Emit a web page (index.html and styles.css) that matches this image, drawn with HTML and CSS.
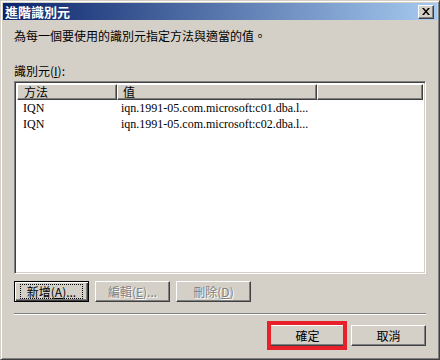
FILE: index.html
```html
<!DOCTYPE html>
<html lang="zh-Hant">
<head>
    <meta charset="UTF-8">
    <title>進階識別元</title>
    <link rel="stylesheet" href="styles.css">
</head>
<body>
<div class="window">
    <div class="titlebar">
        <span class="title">進階識別元</span>
        <div class="closeBtn">
            <svg width="8" height="7" viewBox="0 0 8 7">
                <path d="M0 0h2l2 2.5L6 0h2L5 3.5 8 7H6L4 4.5 2 7H0l3-3.5z" fill="#000"/>
            </svg>
        </div>
    </div>
    <div class="content">
        <p class="intro">為每一個要使用的識別元指定方法與適當的值。</p>
        <div class="label">識別元(<u>I</u>):</div>
        <div class="listview">
            <div class="lvHeader">
                <div class="col colMethod">方法</div>
                <div class="col colValue">值</div>
                <div class="col colRest"></div>
            </div>
            <div class="lvRow"><span class="cellMethod">IQN</span><span class="cellValue">iqn.1991-05.com.microsoft:c01.dba.l...</span></div>
            <div class="lvRow"><span class="cellMethod">IQN</span><span class="cellValue">iqn.1991-05.com.microsoft:c02.dba.l...</span></div>
        </div>
        <div class="btnRow">
            <div class="btn btnDefault"><span class="focus">新增(<u>A</u>)...</span></div>
            <div class="btn disabled">編輯(<u>E</u>)...</div>
            <div class="btn disabled">刪除(<u>D</u>)</div>
        </div>
        <div class="sep"></div>
        <div class="footer">
            <div class="btn okBtn">確定</div>
            <div class="btn">取消</div>
            <div class="highlight"></div>
        </div>
    </div>
</div>
</body>
</html>
```

FILE: styles.css
```css
body {
    margin: 0;
    padding: 0;
    background: #d4d0c8;
    font-family: "Noto Sans CJK TC", "Liberation Sans", sans-serif;
    font-size: 12px;
    color: #000;
}

.window {
    width: 440px;
    height: 360px;
    box-sizing: border-box;
    background: #d4d0c8;
    border: 1px solid;
    border-color: #d4d0c8 #404040 #404040 #d4d0c8;
    box-shadow: inset 1px 1px #fff, inset -1px -1px #808080;
    padding: 2px;
}

.titlebar {
    height: 17px;
    display: flex;
    align-items: center;
    justify-content: space-between;
    background: linear-gradient(90deg, #0a246a, #a6caf0);
    padding: 0 3px 0 2px;
}

.title {
    color: #fff;
    font-weight: bold;
    font-size: 13px;
    line-height: 17px;
}

.closeBtn {
    width: 16px;
    height: 14px;
    box-sizing: border-box;
    display: flex;
    align-items: center;
    justify-content: center;
    background: #d4d0c8;
    border: 1px solid;
    border-color: #fff #404040 #404040 #fff;
    box-shadow: inset -1px -1px #808080;
}

.content {
    padding: 0 11px 0 11px;
}

.intro {
    margin: 8px 0 0 0;
    line-height: 15px;
}

.label {
    margin-top: 21px;
    line-height: 14px;
}

.listview {
    margin-top: 3px;
    height: 193px;
    box-sizing: border-box;
    background: #fff;
    border: 1px solid;
    border-color: #808080 #fff #fff #808080;
    box-shadow: inset 1px 1px #404040, inset -1px -1px #d4d0c8;
    padding: 2px 2px;
}

.lvHeader {
    display: flex;
    height: 16px;
}

.col {
    box-sizing: border-box;
    background: #d4d0c8;
    border: 1px solid;
    border-color: #fff #404040 #404040 #fff;
    box-shadow: inset -1px -1px #808080;
    line-height: 14px;
    padding-left: 6px;
}

.colMethod {
    width: 100px;
}

.colValue {
    width: 200px;
    padding-left: 5px;
}

.colRest {
    flex: 1;
}

.lvRow {
    display: flex;
    height: 16px;
    line-height: 16px;
    font-family: "Liberation Serif", serif;
    font-size: 12px;
}

.cellMethod {
    width: 100px;
    padding-left: 6px;
    box-sizing: border-box;
}

.cellValue {
    padding-left: 4px;
}

.btnRow {
    margin-top: 7px;
    display: flex;
    gap: 6px;
}

.btn {
    width: 75px;
    height: 21px;
    box-sizing: border-box;
    display: flex;
    align-items: center;
    justify-content: center;
    background: #d4d0c8;
    border: 1px solid;
    border-color: #fff #404040 #404040 #fff;
    box-shadow: inset -1px -1px #808080;
    line-height: 14px;
}

.btnDefault {
    border: 1px solid #000;
    box-shadow: inset 1px 1px #fff, inset -1px -1px #404040, inset -2px -2px #808080;
}

.focus {
    border: 1px dotted #000;
    padding: 0 6px;
    line-height: 13px;
}

.disabled {
    color: #808080;
    text-shadow: 1px 1px #fff;
}

.sep {
    margin-top: 11px;
    border-top: 1px solid #808080;
    border-bottom: 1px solid #fff;
    height: 0;
}

.footer {
    margin-top: 10px;
    display: flex;
    justify-content: flex-end;
    gap: 6px;
    position: relative;
}

.highlight {
    position: absolute;
    left: 253px;
    top: -4px;
    width: 80px;
    height: 29px;
    box-sizing: border-box;
    border: 4px solid #e8202a;
    pointer-events: none;
}
```
